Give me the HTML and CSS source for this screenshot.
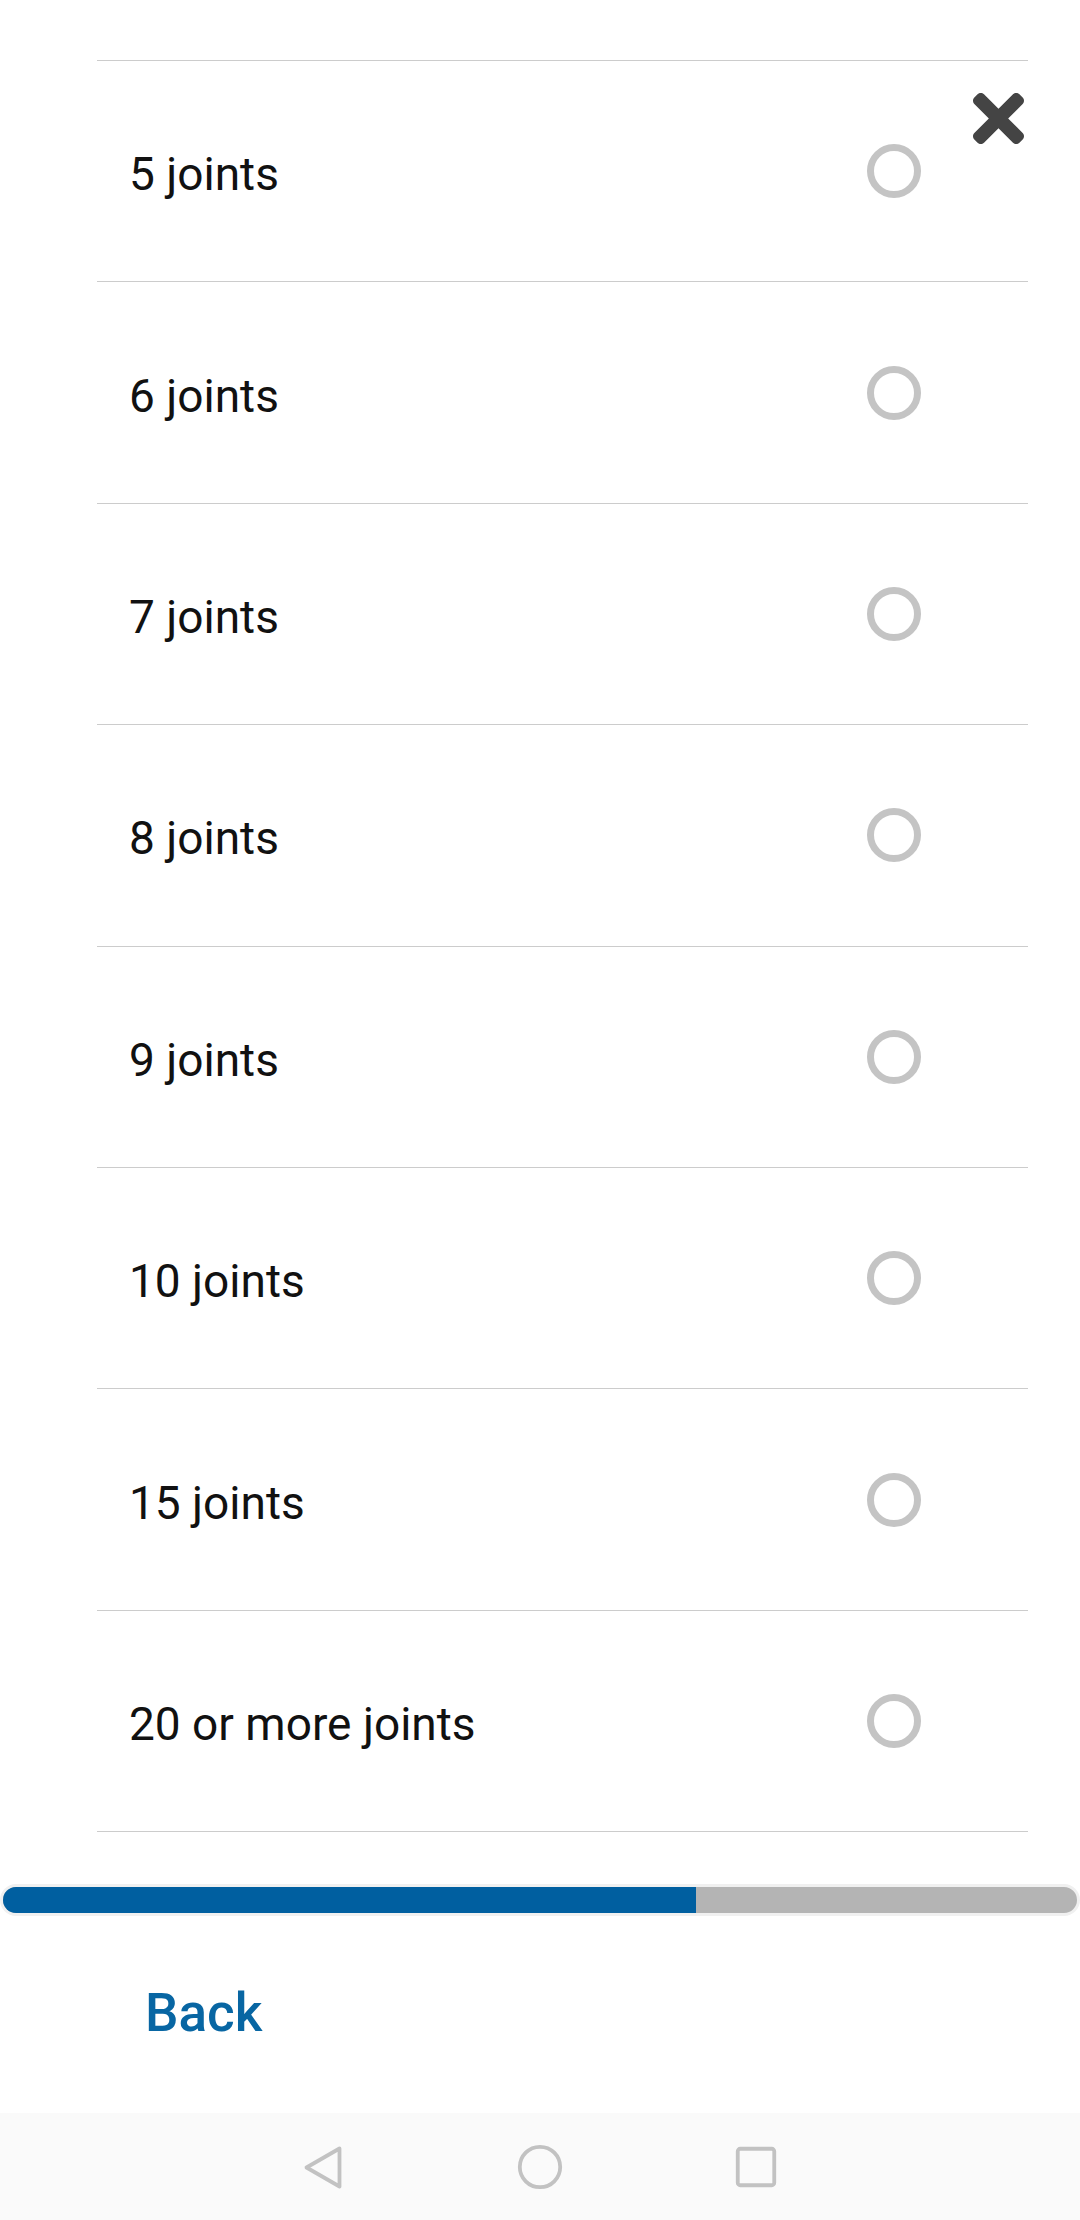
FILE: index.html
```html
<!DOCTYPE html>
<html>
<head>
<meta charset="utf-8">
<link rel="stylesheet" href="styles.css">
</head>
<body>
<div class="screen">
  <div class="content">
    <ul class="options">
      <li class="option"><span class="label">5 joints</span><span class="radio"></span></li>
      <li class="option"><span class="label">6 joints</span><span class="radio"></span></li>
      <li class="option"><span class="label">7 joints</span><span class="radio"></span></li>
      <li class="option"><span class="label">8 joints</span><span class="radio"></span></li>
      <li class="option"><span class="label">9 joints</span><span class="radio"></span></li>
      <li class="option"><span class="label">10 joints</span><span class="radio"></span></li>
      <li class="option"><span class="label">15 joints</span><span class="radio"></span></li>
      <li class="option"><span class="label">20 or more joints</span><span class="radio"></span></li>
    </ul>
    <button class="close" aria-label="Close">
      <svg viewBox="0 80 352 352" width="51" height="51"><path fill="#444" d="M242.72 256l100.07-100.07c12.28-12.28 12.28-32.19 0-44.48l-22.24-22.24c-12.28-12.28-32.19-12.28-44.48 0L176 189.28 75.930 89.21c-12.28-12.280-32.190-12.280-44.480 0L9.21 111.45c-12.28 12.28-12.28 32.19 0 44.48L109.28 256 9.21 356.07c-12.28 12.28-12.28 32.19 0 44.48l22.24 22.24c12.28 12.28 32.2 12.28 44.48 0L176 322.72l100.07 100.07c12.28 12.28 32.2 12.28 44.48 0l22.240-22.240c12.280-12.280 12.280-32.190 0-44.480L242.72 256z"/></svg>
    </button>
  </div>
  <div class="progress"><div class="progress-fill" style="width: 64.5%"></div></div>
  <div class="footer"><span class="back">Back</span></div>
  <nav class="navbar">
    <span class="nav-slot">
      <svg width="44" height="48" viewBox="0 0 44 48"><path d="M37.5 5.5 L4.5 24.5 L37.5 43.5 Z" fill="none" stroke="#c2c2c2" stroke-width="3.8" stroke-linejoin="round"/></svg>
    </span>
    <span class="nav-slot">
      <svg width="46" height="46" viewBox="0 0 46 46"><circle cx="23" cy="23" r="20.2" fill="none" stroke="#c2c2c2" stroke-width="3.8"/></svg>
    </span>
    <span class="nav-slot">
      <svg width="42" height="42" viewBox="0 0 42 42"><rect x="2.75" y="2.75" width="36.5" height="36.5" rx="2.5" fill="none" stroke="#c2c2c2" stroke-width="3.8"/></svg>
    </span>
  </nav>
</div>
</body>
</html>
```

FILE: styles.css
```css
html, body {
  margin: 0;
  padding: 0;
  background: #ffffff;
}
body {
  font-family: Roboto, "Noto Sans", "Liberation Sans", sans-serif;
  width: 1080px;
  height: 2220px;
  overflow: hidden;
}
.screen {
  display: flex;
  flex-direction: column;
  height: 2220px;
}
.content {
  position: relative;
  padding: 60px 52px 0 97px;
}
.options {
  list-style: none;
  margin: 0;
  padding: 0;
  border-top: 1px solid #cccccc;
}
.option {
  display: flex;
  align-items: center;
  justify-content: space-between;
  height: 220.4px;
  border-bottom: 1px solid #cccccc;
  padding: 0 107px 0 32px;
}
.label {
  font-size: 46px;
  color: #111111;
  padding-top: 6px;
}
.radio {
  width: 54px;
  height: 54px;
  box-sizing: border-box;
  border: 7px solid #c4c4c4;
  border-radius: 50%;
}
.close {
  position: absolute;
  top: 93px;
  left: 973px;
  width: 51px;
  height: 51px;
  padding: 0;
  border: 0;
  background: none;
  display: block;
}
.close svg {
  display: block;
}
.progress {
  margin-top: 52px;
  height: 26px;
  border: 3px solid #f0f0f0;
  border-radius: 16px;
  background: #b4b4b4;
  overflow: hidden;
}
.progress-fill {
  height: 100%;
  background: #005fa0;
}
.footer {
  flex: 1;
  padding: 66px 0 0 145px;
}
.back {
  font-size: 53px;
  font-weight: 500;
  color: #0866a3;
}
.navbar {
  height: 107px;
  background: #fafafa;
  display: flex;
  justify-content: center;
  align-items: center;
}
.nav-slot {
  width: 216px;
  display: flex;
  justify-content: center;
  align-items: center;
}
.nav-slot svg {
  display: block;
}
```
